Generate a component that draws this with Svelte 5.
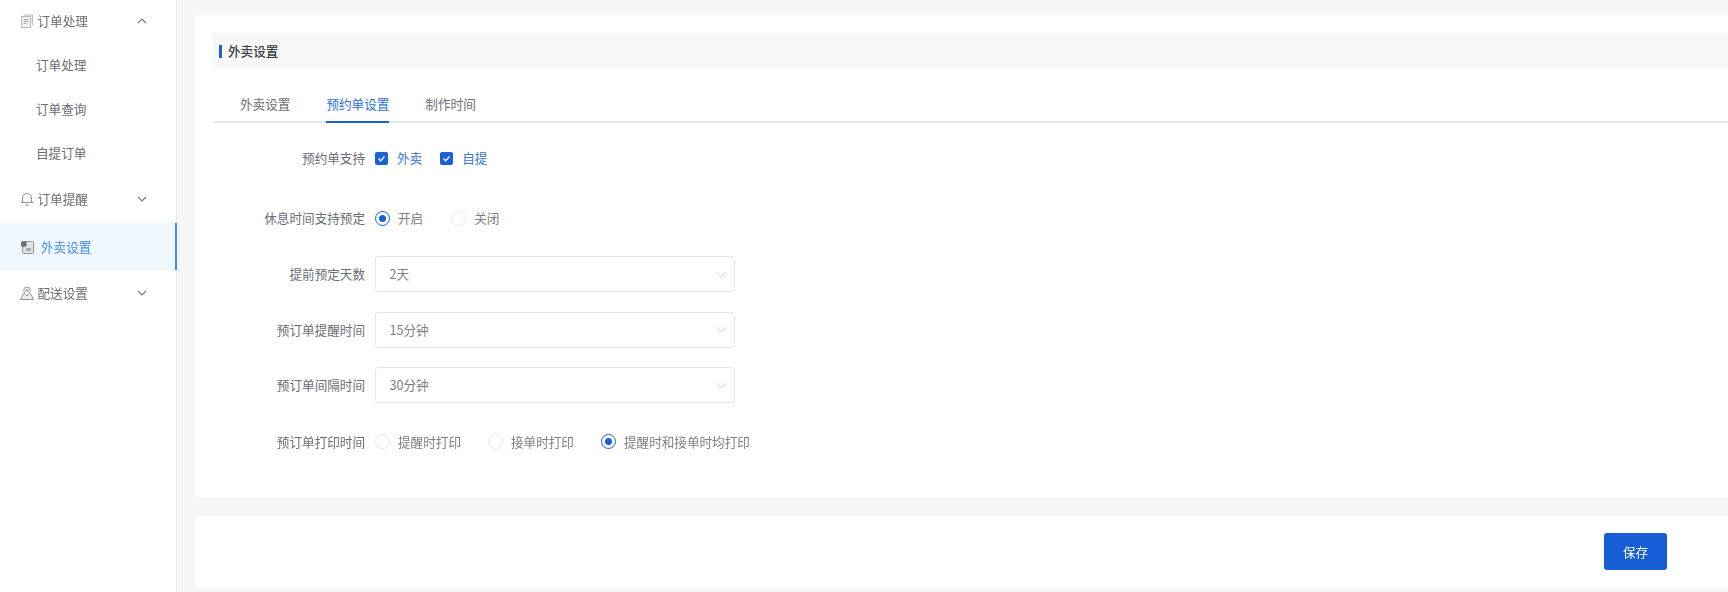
<script>
  const rows = [
    { label: '提前预定天数', value: '2天' },
    { label: '预订单提醒时间', value: '15分钟' },
    { label: '预订单间隔时间', value: '30分钟' }
  ];
  const printOptions = [
    { text: '提醒时打印', on: false },
    { text: '接单时打印', on: false },
    { text: '提醒时和接单时均打印', on: true }
  ];
</script>

<div class="page">
  <aside class="side">
    <div class="item top first">
      <svg class="ico" viewBox="0 0 14 14" fill="none" stroke="#b9bcc2" stroke-width="1"><path d="M3.500 1h9v10.500" fill="#eceded"/><rect x="1.500" y="2.500" width="9" height="11" fill="#f4f4f5"/><path d="M3.500 5.500h5M3.500 7.500h5M3.500 9.500h3" stroke="#a5a8ae"/></svg>
      <span>订单处理</span>
      <svg class="chev" viewBox="0 0 10 6" fill="none" stroke="#777b82" stroke-width="1.200"><path d="M1 5l4-4 4 4"/></svg>
    </div>
    <div class="item sub">订单处理</div>
    <div class="item sub">订单查询</div>
    <div class="item sub">自提订单</div>
    <div class="item top">
      <svg class="ico" viewBox="0 0 14 14" fill="none" stroke="#8f9299" stroke-width="1"><path d="M2.500 10V6a4.500 4.500 0 0 1 9 0v4M1 10.500h12M5 13h4"/></svg>
      <span>订单提醒</span>
      <svg class="chev" viewBox="0 0 10 6" fill="none" stroke="#777b82" stroke-width="1.200"><path d="M1 1l4 4 4-4"/></svg>
    </div>
    <div class="item top active">
      <svg class="ico" viewBox="0 0 14 14" fill="none"><rect x="2.500" y="1.500" width="11" height="12" rx="1" fill="#e2e3e5" stroke="#8f9299"/><circle cx="3.800" cy="4" r="3" fill="#6d7076"/><rect x="6" y="8" width="5" height="3" fill="#a5a8ae"/></svg>
      <span>外卖设置</span>
    </div>
    <div class="item top">
      <svg class="ico" viewBox="0 0 14 14" fill="none" stroke="#8f9299" stroke-width="1"><path d="M3.500 7.500L.5 13.500h13l-3-6" fill="#ededee"/><path d="M7 10C5 8.200 3.800 6.500 3.800 4.300a3.200 3.200 0 0 1 6.400 0C10.200 6.500 9 8.200 7 10z" fill="#fff"/><circle cx="7" cy="4.300" r="1.100"/></svg>
      <span>配送设置</span>
      <svg class="chev" viewBox="0 0 10 6" fill="none" stroke="#777b82" stroke-width="1.200"><path d="M1 1l4 4 4-4"/></svg>
    </div>
  </aside>

  <main class="main">
    <section class="card">
      <header class="head"><i class="bar"></i>外卖设置</header>
      <nav class="tabs">
        <span class="tab">外卖设置</span>
        <span class="tab on">预约单设置</span>
        <span class="tab">制作时间</span>
      </nav>

      <div class="row support">
        <span class="label">预约单支持</span>
        <span class="check"><i class="box"><svg viewBox="0 0 13 13" fill="none" stroke="#fff" stroke-width="1.300"><path d="M3.500 6.500l2.200 2.200L9.500 4.500"/></svg></i>外卖</span>
        <span class="check"><i class="box"><svg viewBox="0 0 13 13" fill="none" stroke="#fff" stroke-width="1.300"><path d="M3.500 6.500l2.200 2.200L9.500 4.500"/></svg></i>自提</span>
      </div>

      <div class="row rest">
        <span class="label">休息时间支持预定</span>
        <span class="radio wide"><i class="dot sel"></i>开启</span>
        <span class="radio wide"><i class="dot"></i>关闭</span>
      </div>

      <div class="selects">
        {#each rows as r}
          <div class="row">
            <span class="label">{r.label}</span>
            <div class="select">
              <span>{r.value}</span>
              <svg viewBox="0 0 12 7" fill="none" stroke="#d0d3d8" stroke-width="1"><path d="M1 1l5 5 5-5"/></svg>
            </div>
          </div>
        {/each}
      </div>

      <div class="row print">
        <span class="label">预订单打印时间</span>
        {#each printOptions as o}
          <span class="radio"><i class="dot" class:sel={o.on}></i>{o.text}</span>
        {/each}
      </div>
    </section>

    <section class="card foot">
      <button class="save">保存</button>
    </section>
  </main>
</div>

<style>
  :global(body) {
    margin: 0;
    background: #f5f6f8;
    overflow: hidden;
  }
  .page {
    display: flex;
    width: 1728px;
    height: 592px;
    overflow: hidden;
    font-family: "Noto Sans CJK SC", "Liberation Sans", sans-serif;
    font-size: 12.6px;
    line-height: 20px;
    color: #696d74;
    filter: blur(0.3px);
  }
  .side {
    width: 176px;
    flex: none;
    background: #fff;
    border-right: 1px solid #e6e8ec;
  }
  .item {
    display: flex;
    align-items: center;
    height: 44px;
    box-sizing: border-box;
    padding-bottom: 2px;
  }
  .top {
    padding-left: 20px;
    position: relative;
    height: 47px;
  }
  .first { height: 44px; }
  .sub {
    padding-left: 36px;
  }
  .ico {
    width: 14px;
    height: 14px;
    margin-right: 3.500px;
    flex: none;
  }
  .chev {
    position: absolute;
    left: 137px;
    top: 50%;
    width: 10px;
    height: 6px;
    margin-top: -4px;
  }
  .active {
    background: #f0f8ff;
    color: #3f8cf5;
    border-right: 2px solid #3f8cf5;
    margin-right: -1px;
    padding-bottom: 0;
  }
  .active .ico { margin-right: 7px; }
  .main {
    flex: 1;
    min-width: 0;
    padding: 15px 0 5px 18px;
    display: flex;
    flex-direction: column;
    gap: 18px;
  }
  .card {
    background: #fff;
    border-radius: 4px 0 0 4px;
    height: 483px;
    padding: 18px 0 0 18px;
    box-sizing: border-box;
  }
  .head {
    display: flex;
    align-items: center;
    height: 36px;
    background: #f7f7f8;
    font-weight: 500;
    color: #3a3d44;
    padding-left: 6px;
  }
  .bar {
    width: 3px;
    height: 13px;
    background: #1b5fd9;
    margin-right: 6px;
  }
  .tabs {
    display: flex;
    height: 42px;
    margin-top: 12px;
    padding-left: 27px;
    gap: 36px;
    border-bottom: 2px solid #e8eaf0;
    box-sizing: border-box;
  }
  .tab {
    height: 42px;
    padding-top: 13px;
    box-sizing: border-box;
  }
  .tab.on {
    color: #2f6fdc;
    border-bottom: 2px solid #1b5fd9;
  }
  .row {
    display: flex;
    align-items: center;
  }
  .label {
    width: 152px;
    text-align: right;
    margin-right: 10px;
    flex: none;
  }
  .support {
    height: 20px;
    margin-top: 25px;
  }
  .check {
    display: inline-flex;
    align-items: center;
    color: #3b74d8;
    margin-right: 18px;
  }
  .box {
    width: 13px;
    height: 13px;
    border-radius: 2px;
    background: #1b5fd9;
    margin-right: 9px;
    display: block;
  }
  .box svg { display: block; }
  .rest {
    height: 20px;
    margin-top: 40px;
    margin-bottom: 28.400px;
  }
  .radio {
    display: inline-flex;
    align-items: center;
    margin-right: 27px;
    color: #7c8087;
  }
  .radio.wide { margin-right: 28px; }
  .dot {
    width: 15px;
    height: 15px;
    box-sizing: border-box;
    border: 1px solid #e4e5e8;
    border-radius: 50%;
    margin-right: 8px;
    background: #fff;
    position: relative;
  }
  .dot.sel { border-color: #1b5fd9; }
  .dot.sel::after {
    content: "";
    position: absolute;
    inset: 3px;
    border-radius: 50%;
    background: #1b5fd9;
  }
  .selects {
    display: flex;
    flex-direction: column;
    gap: 19.5px;
  }
  .select {
    width: 360px;
    height: 36px;
    box-sizing: border-box;
    border: 1px solid #e4e6ec;
    border-radius: 3px;
    padding: 0 7px 0 13.500px;
    display: flex;
    align-items: center;
    justify-content: space-between;
    color: #7c8087;
  }
  .select svg {
    width: 12px;
    height: 7px;
  }
  .print {
    height: 20px;
    margin-top: 28.600px;
  }
  .foot {
    height: 71px;
    padding: 17px 61px 0 0;
    display: flex;
    justify-content: flex-end;
    align-items: flex-start;
  }
  .save {
    width: 63px;
    height: 37px;
    background: #165dd6;
    color: #fff;
    border: 0;
    border-radius: 3px;
    font: inherit;
  }
</style>
